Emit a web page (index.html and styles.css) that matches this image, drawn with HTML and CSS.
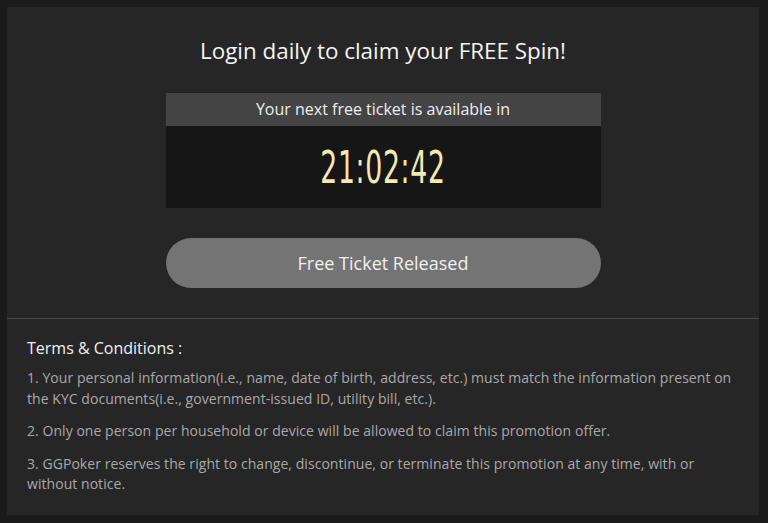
FILE: index.html
```html
<!DOCTYPE html>
<html lang="en">
<head>
<meta charset="utf-8">
<title>Free Spin</title>
<link rel="stylesheet" href="styles.css">
</head>
<body>
<div class="panel">
  <section class="top">
    <h1 class="title">Login daily to claim your FREE Spin!</h1>
    <div class="timer">
      <div class="timer-head">Your next free ticket is available in</div>
      <div class="timer-body"><span class="digits">21:02:42</span></div>
    </div>
    <button class="btn" type="button">Free Ticket Released</button>
  </section>
  <section class="terms">
    <h2 class="terms-title">Terms &amp; Conditions :</h2>
    <p>1. Your personal information(i.e., name, date of birth, address, etc.) must match the information present on the KYC documents(i.e., government-issued ID, utility bill, etc.).</p>
    <p>2. Only one person per household or device will be allowed to claim this promotion offer.</p>
    <p>3. GGPoker reserves the right to change, discontinue, or terminate this promotion at any time, with or without notice.</p>
  </section>
</div>
</body>
</html>
```

FILE: styles.css
```css
html, body {
  margin: 0;
  padding: 0;
}
body {
  background: #1b1b1b;
  padding: 7px 9px 8px 7px;
  font-family: "Open Sans", "Noto Sans", sans-serif;
  height: 523px;
  box-sizing: border-box;
}
.panel {
  background: #262626;
  width: 752px;
  height: 508px;
  display: flex;
  flex-direction: column;
}
.top {
  display: flex;
  flex-direction: column;
  align-items: center;
  padding: 28px 0 30px;
  border-bottom: 1px solid #484848;
}
.title {
  margin: 0;
  font-size: 22.4px;
  line-height: 31px;
  font-weight: 400;
  color: #f4f4f4;
}
.timer {
  margin-top: 27px;
  width: 435px;
}
.timer-head {
  height: 33px;
  line-height: 33px;
  background: #444444;
  color: #eeeeee;
  font-size: 16px;
  text-align: center;
}
.timer-body {
  height: 82px;
  background: #161616;
  display: flex;
  align-items: center;
  justify-content: center;
}
.digits {
  display: inline-block;
  font-family: "DejaVu Sans Condensed", "DejaVu Sans", sans-serif;
  font-size: 45px;
  line-height: 1;
  color: #f5e8b5;
  transform: scaleX(0.66);
  letter-spacing: 1px;
}
.btn {
  margin-top: 30px;
  width: 435px;
  height: 50px;
  border: none;
  border-radius: 25px;
  background: #747474;
  color: #f0f0f0;
  font-family: "Open Sans", "Noto Sans", sans-serif;
  font-size: 18px;
  padding: 0;
}
.terms {
  padding: 18px 20px 0;
}
.terms-title {
  margin: 0 0 9px;
  font-size: 16px;
  line-height: 22px;
  font-weight: 500;
  color: #f0f0f0;
}
.terms p {
  margin: 0 0 12px;
  font-size: 14px;
  line-height: 20.5px;
  letter-spacing: 0.05px;
  color: #a9a9a9;
}
```
